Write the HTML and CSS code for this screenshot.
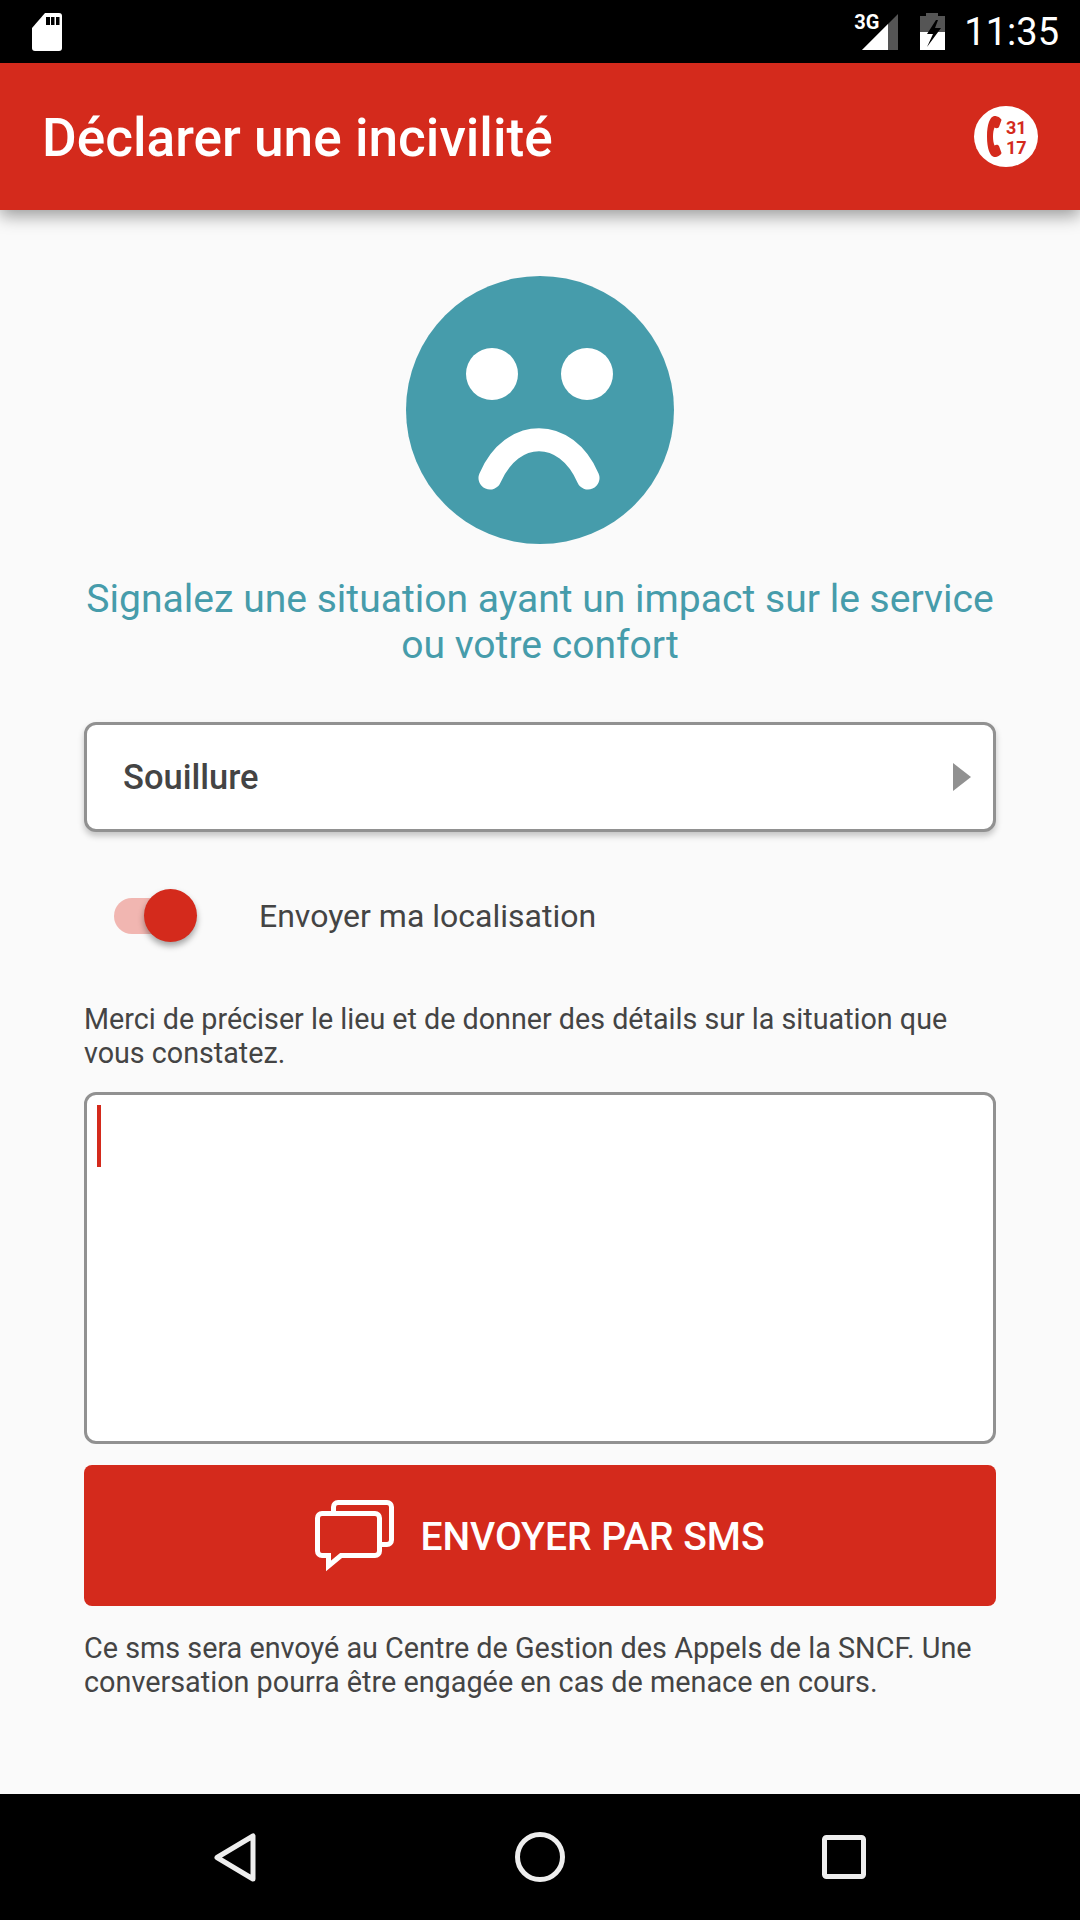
FILE: index.html
```html
<!DOCTYPE html>
<html>
<head>
    <title>Déclarer une incivilité</title>
    <link rel="stylesheet" href="styles.css">
</head>
<body>
    <div class="statusbar">
        <svg width="30" height="38" viewBox="0 0 30 38"><path d="M13 0H27a3 3 0 0 1 3 3V35a3 3 0 0 1-3 3H3a3 3 0 0 1-3-3V15Z" fill="#fff"/><path d="M14 4h4v8h-4ZM19 4h3.500v8h-3.500ZM24 4h3.500v8h-3.500Z" fill="#000"/></svg>
        <div class="status-right">
            <div class="signal">
                <span class="net-label">3G</span>
                <svg width="36" height="36" viewBox="0 0 36 36"><path d="M36 0V36H0Z" fill="#555"/><path d="M26 10V36H0Z" fill="#fff"/></svg>
            </div>
            <svg class="battery" width="25" height="37" viewBox="0 0 25 37"><path d="M6 0h12v3h7v16H0V3h6Z" fill="#555"/><path d="M0 19h25v18H0Z" fill="#fff"/><path d="M16 7 7 21h6L7 34 21 15h-6l3-8Z" fill="#000"/></svg>
            <span class="clock">11:35</span>
        </div>
    </div>

    <header class="appbar">
        <h1>Déclarer une incivilité</h1>
        <svg width="64" height="61" viewBox="0 0 64 61">
            <ellipse cx="32" cy="30.500" rx="32" ry="30.500" fill="#fff"/>
            <path d="M20 10C16 11 13 18 13 30.500S16 50 20 51C23 51.500 27 49 27.500 47L25 40C24 38.500 22 38.500 20.500 39.500C18.500 35 18.500 26 20.500 21.500C22 22.500 24 22.500 25 21L27.500 14C27 12 23 9.500 20 10Z" fill="#d42a1c"/>
            <text x="32" y="28" class="num">31</text>
            <text x="32" y="47.500" class="num">17</text>
        </svg>
    </header>

    <main class="content">
        <svg class="smiley" width="268" height="268" viewBox="0 0 268 268">
            <circle cx="134" cy="134" r="134" fill="#469cab"/>
            <circle cx="86" cy="98" r="26" fill="#fff"/>
            <circle cx="181" cy="98" r="26" fill="#fff"/>
            <path d="M84 202C106 151 160 151 182 202" fill="none" stroke="#fff" stroke-width="23" stroke-linecap="round"/>
        </svg>

        <p class="lead">Signalez une situation ayant un impact sur le service ou votre confort</p>

        <div class="select">
            <span>Souillure</span>
            <span class="select-arrow"></span>
        </div>

        <div class="toggle-row">
            <div class="toggle">
                <span class="toggle-track"></span>
                <span class="toggle-thumb"></span>
            </div>
            <span class="toggle-label">Envoyer ma localisation</span>
        </div>

        <p class="hint">Merci de préciser le lieu et de donner des détails sur la situation que vous constatez.</p>

        <div class="textarea"><span class="caret"></span></div>

        <button class="send-btn">
            <svg width="79" height="73" viewBox="0 0 79 73" fill="none" stroke="#fff" stroke-width="5">
                <path d="M18.500 13V7A4.500 4.500 0 0 1 23 2.500H72A4.500 4.500 0 0 1 76.500 7V40A4.500 4.500 0 0 1 72 44.500H65"/>
                <path d="M7 13.500H60A4.500 4.500 0 0 1 64.500 18V51A4.500 4.500 0 0 1 60 55.500H26L13.500 66V55.500H7A4.500 4.500 0 0 1 2.500 51V18A4.500 4.500 0 0 1 7 13.500Z"/>
            </svg>
            ENVOYER PAR SMS
        </button>

        <p class="hint footnote">Ce sms sera envoyé au Centre de Gestion des Appels de la SNCF. Une conversation pourra être engagée en cas de menace en cours.</p>
    </main>

    <nav class="navbar">
        <svg width="43" height="49" viewBox="0 0 43 49"><path d="M39 3V46L3 24.500Z" fill="none" stroke="#eee" stroke-width="5" stroke-linejoin="round"/></svg>
        <svg width="50" height="50" viewBox="0 0 50 50"><circle cx="25" cy="25" r="22.500" fill="none" stroke="#eee" stroke-width="5"/></svg>
        <svg width="44" height="44" viewBox="0 0 44 44"><rect x="2.500" y="2.500" width="39" height="39" rx="2" fill="none" stroke="#eee" stroke-width="5"/></svg>
    </nav>
</body>
</html>
```

FILE: styles.css
```css
body {
    margin: 0;
    width: 1080px;
    height: 1920px;
    display: flex;
    flex-direction: column;
    font-family: Roboto, sans-serif;
    background-color: #fafafa;
    overflow: hidden;
}

.statusbar {
    height: 63px;
    background: #000;
    display: flex;
    justify-content: space-between;
    align-items: center;
    padding: 0 21px 0 32px;
}
.status-right {
    display: flex;
    align-items: center;
}
.signal {
    position: relative;
    width: 36px;
    height: 36px;
    margin-right: 22px;
}
.net-label {
    position: absolute;
    left: -8px;
    top: 1px;
    color: #fff;
    font-size: 20px;
    line-height: 15px;
    font-weight: 700;
}
.clock {
    color: #fff;
    font-size: 38px;
    margin-left: 19px;
}

.appbar {
    height: 147px;
    flex-shrink: 0;
    background-color: #d42a1c;
    box-shadow: 0 6px 16px rgba(0,0,0,0.38);
    display: flex;
    justify-content: space-between;
    align-items: center;
    padding: 0 42px 0 42px;
    position: relative;
}
.appbar h1 {
    margin: 3px 0 0;
    color: #fff;
    font-size: 53.200px;
    font-weight: 500;
}
.num {
    font-family: Roboto, sans-serif;
    font-size: 18px;
    font-weight: 700;
    fill: #d42a1c;
}

.content {
    flex: 1;
    display: flex;
    flex-direction: column;
    align-items: center;
    padding: 66px 84px 0;
}
.lead {
    margin: 32px 0 0;
    width: 100%;
    text-align: center;
    color: #469cab;
    font-size: 39.100px;
    line-height: 46px;
}

.select {
    box-sizing: border-box;
    width: 100%;
    height: 110px;
    margin-top: 54px;
    padding: 0 22px 0 36px;
    background: #fff;
    border: 3px solid #919191;
    border-radius: 12px;
    box-shadow: 0 4px 6px rgba(0,0,0,0.22);
    display: flex;
    justify-content: space-between;
    align-items: center;
    color: #444;
    font-size: 34.500px;
    font-weight: 500;
}
.select-arrow {
    border-left: 18px solid #919191;
    border-top: 14px solid transparent;
    border-bottom: 14px solid transparent;
}

.toggle-row {
    width: 100%;
    display: flex;
    align-items: center;
    margin-top: 57px;
}
.toggle {
    position: relative;
    width: 83px;
    height: 53px;
    margin-left: 30px;
}
.toggle-track {
    position: absolute;
    left: 0;
    top: 9px;
    width: 70px;
    height: 36px;
    border-radius: 18px;
    background: #f1b6b1;
}
.toggle-thumb {
    position: absolute;
    right: 0;
    top: 0;
    width: 53px;
    height: 53px;
    border-radius: 50%;
    background: #d42a1c;
    box-shadow: 0 4px 6px rgba(0,0,0,0.35);
}
.toggle-label {
    margin-left: 62px;
    color: #444;
    font-size: 32px;
}

.hint {
    width: 100%;
    margin: 60px 0 0;
    color: #444;
    font-size: 28.700px;
    line-height: 34px;
}

.textarea {
    box-sizing: border-box;
    width: 100%;
    height: 352px;
    margin-top: 22px;
    padding: 10px;
    background: #fff;
    border: 3px solid #919191;
    border-radius: 12px;
}
.caret {
    display: block;
    width: 4px;
    height: 62px;
    background: #d42a1c;
}

.send-btn {
    width: 100%;
    height: 141px;
    flex-shrink: 0;
    margin-top: 21px;
    padding: 2px 0 0;
    border: none;
    border-radius: 8px;
    background-color: #d42a1c;
    color: #fff;
    font-family: Roboto, sans-serif;
    font-size: 39px;
    font-weight: 500;
    display: flex;
    justify-content: center;
    align-items: center;
    gap: 26px;
}
.footnote {
    margin-top: 25px;
    font-size: 28.800px;
}

.navbar {
    height: 126px;
    flex-shrink: 0;
    background: #000;
    display: flex;
    align-items: center;
    justify-content: space-between;
    padding: 0 214px;
}
```
